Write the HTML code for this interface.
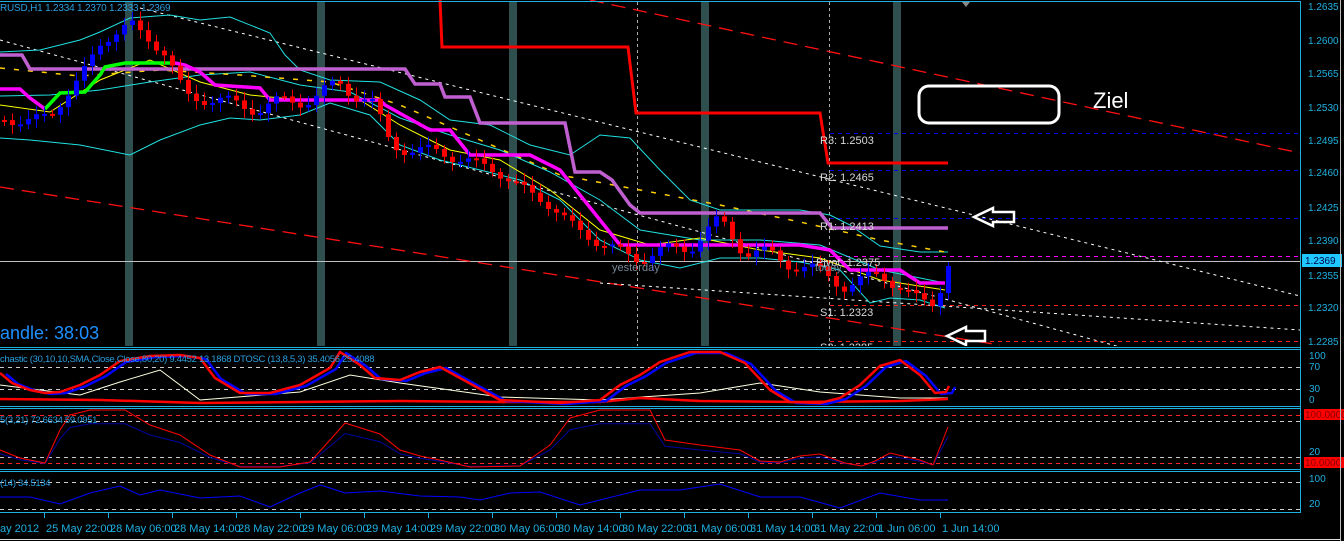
<!DOCTYPE html>
<html><head><meta charset="utf-8">
<style>
html,body{margin:0;padding:0;background:#000;width:1344px;height:541px;overflow:hidden}
svg{display:block}
text{font-family:"Liberation Sans",sans-serif}
</style></head><body>
<svg id="s" width="1344" height="541" viewBox="0 0 1344 541" xmlns="http://www.w3.org/2000/svg">
<rect width="1344" height="541" fill="#000"/>
<g fill="#2f4f4f">
<rect x="125" y="2" width="8" height="345"/><rect x="317" y="2" width="8" height="345"/>
<rect x="509" y="2" width="8" height="345"/><rect x="701" y="2" width="8" height="345"/>
<rect x="893" y="2" width="8" height="345"/>
</g>
<g stroke="#aaa" stroke-dasharray="3,3" stroke-width="1">
<line x1="637.5" y1="2" x2="637.5" y2="347"/><line x1="829.5" y1="2" x2="829.5" y2="347"/>
</g>
<g stroke-dasharray="4,4" stroke-width="1">
<line x1="830" y1="133.5" x2="1300" y2="133.5" stroke="#0000e0"/>
<line x1="830" y1="170.5" x2="1300" y2="170.5" stroke="#0000e0"/>
<line x1="830" y1="218.5" x2="1300" y2="218.5" stroke="#0000e0"/>
<line x1="830" y1="256.5" x2="1300" y2="256.5" stroke="#ff00ff"/>
<line x1="830" y1="305.5" x2="1300" y2="305.5" stroke="#ff2020"/>
<line x1="830" y1="341.5" x2="1300" y2="341.5" stroke="#ff2020"/>
</g>
<line x1="0" y1="261.5" x2="1300" y2="261.5" stroke="#c0c0c0"/>
<g stroke="#ff1010" stroke-dasharray="14,8" stroke-width="1.3" fill="none">
<line x1="590" y1="0" x2="1300" y2="153"/>
<line x1="0" y1="187" x2="1000" y2="345"/>
</g>
<g stroke="#fff" stroke-dasharray="3,4" stroke-width="1" fill="none">
<line x1="140" y1="8" x2="1300" y2="296"/>
<line x1="0" y1="40" x2="1120" y2="347"/>
<line x1="600" y1="283" x2="1300" y2="330"/>
</g>
<g id="dyn"></g>
<rect x="919" y="86" width="140" height="37" rx="10" fill="none" stroke="#fff" stroke-width="3"/>
<text x="1093" y="108" fill="#fff" font-size="22">Ziel</text>
<path d="M974,217 L993,208 L993,212 L1014,212 L1014,222 L993,222 L993,226 Z" fill="none" stroke="#fff" stroke-width="2.5"/>
<path d="M947,336 L966,327 L966,331 L985,331 L985,341 L966,341 L966,345 Z" fill="none" stroke="#fff" stroke-width="2.5"/>
<g fill="#d8d8d8" font-size="11">
<text x="820" y="144">R3: 1.2503</text><text x="820" y="181">R2: 1.2465</text>
<text x="820" y="230">R1: 1.2413</text><text x="816" y="266">Pivot: 1.2375</text>
<text x="820" y="316">S1: 1.2323</text><text x="820" y="351">S2: 1.2285</text>
</g>
<text x="612" y="271" fill="#789" font-size="11">yesterday</text>
<text x="815" y="271" fill="#789" font-size="11">today</text>
<text x="0" y="11" fill="#2a9fe0" font-size="10" letter-spacing="-0.2">RUSD,H1  1.2334 1.2370 1.2333 1.2369</text>
<text x="0" y="339" fill="#1e90ff" font-size="18">andle:  38:03</text>
<path d="M962,2 L970,2 L966,7 Z" fill="#888"/>
<rect x="0" y="346" width="1300" height="6" fill="#000"/>
<g fill="none" stroke="#1fb0e0" stroke-width="1">
<line x1="0" y1="1.5" x2="1300" y2="1.5"/>
<line x1="0" y1="347.5" x2="1300" y2="347.5"/><line x1="0" y1="349.5" x2="1300" y2="349.5"/>
<line x1="0" y1="406.5" x2="1300" y2="406.5"/><line x1="0" y1="408.5" x2="1300" y2="408.5"/>
<line x1="0" y1="469.5" x2="1300" y2="469.5"/><line x1="0" y1="471.5" x2="1300" y2="471.5"/>
<line x1="0" y1="512.5" x2="1300" y2="512.5"/>
<line x1="1300.5" y1="1" x2="1300.5" y2="513"/>
</g>
<rect x="0" y="350" width="1300" height="56" fill="#000"/>
<rect x="0" y="409" width="1300" height="60" fill="#000"/>
<rect x="0" y="472" width="1300" height="40" fill="#000"/>
<g stroke-dasharray="4,4" stroke-width="1">
<line x1="0" y1="367.5" x2="1300" y2="367.5" stroke="#ccc"/>
<line x1="0" y1="389.5" x2="1300" y2="389.5" stroke="#ccc"/>
<line x1="0" y1="415.5" x2="1300" y2="415.5" stroke="#ff2020"/>
<line x1="0" y1="421.5" x2="1300" y2="421.5" stroke="#ccc"/>
<line x1="0" y1="457.5" x2="1300" y2="457.5" stroke="#ccc"/>
<line x1="0" y1="463.5" x2="1300" y2="463.5" stroke="#ff2020"/>
<line x1="0" y1="482.5" x2="1300" y2="482.5" stroke="#ccc"/>
<line x1="0" y1="509.5" x2="1300" y2="509.5" stroke="#ccc"/>
</g>
<g id="osc"></g>
<g fill="#2a9fe0" font-size="9.5" letter-spacing="-0.3">
<text x="0" y="362">chastic (30,10,10,SMA,Close,Close,80,20) 9.4452 13.1868  DTOSC (13,8,5,3) 35.4056 25.4088</text>
<text x="0" y="423">5(3,21) 72.6634 59.0951</text>
<text x="0" y="486">(14) 34.5134</text>
</g>
<g fill="#1fb0e0" font-size="10">
<text x="1308" y="10">1.2635</text><text x="1308" y="44">1.2600</text><text x="1308" y="77">1.2565</text>
<text x="1308" y="111">1.2530</text><text x="1308" y="144">1.2495</text><text x="1308" y="176">1.2460</text>
<text x="1308" y="211">1.2425</text><text x="1308" y="244">1.2390</text><text x="1308" y="279">1.2355</text>
<text x="1308" y="311">1.2320</text><text x="1308" y="345">1.2285</text>
<text x="1309" y="359">100</text><text x="1309" y="370">70</text><text x="1309" y="392">30</text><text x="1309" y="403">0</text>
<text x="1309" y="420">80</text><text x="1309" y="455">20</text>
<text x="1309" y="482">100</text><text x="1309" y="507">20</text>
</g>
<rect x="1302" y="254" width="40" height="13" fill="#1ec8ff"/>
<text x="1305" y="264" fill="#004" font-size="10">1.2369</text>
<rect x="1304" y="409" width="40" height="11" fill="#ff0000"/>
<text x="1305" y="418" fill="#800" font-size="10">100.0000</text>
<rect x="1304" y="457" width="40" height="11" fill="#ff0000"/>
<text x="1305" y="466" fill="#800" font-size="10">10.0000</text>
<g fill="#1fb0e0" font-size="11" id="dates"><text x="0" y="532">ay 2012</text></g>
<line x1="0" y1="539.5" x2="1340" y2="539.5" stroke="#ddd"/>
<line x1="1340.5" y1="0" x2="1340.5" y2="541" stroke="#bbb"/>
</svg>
<script>
var NS="http://www.w3.org/2000/svg";
function el(p,t,a){var e=document.createElementNS(NS,t);for(var k in a)e.setAttribute(k,a[k]);p.appendChild(e);return e;}
function pl(p,pts,c,w,d){var a={points:pts.map(function(q){return q.join(",")}).join(" "),fill:"none",stroke:c,"stroke-width":w};if(d)a["stroke-dasharray"]=d;el(p,"polyline",a);}
var g=document.getElementById("dyn"),o=document.getElementById("osc"),dt=document.getElementById("dates");
pl(g,[[0,52],[40,50],[80,40],[100,32],[130,18],[170,15],[200,20],[230,17],[270,33],[285,55],[300,70],[330,80],[380,82],[420,100],[450,120],[490,125],[530,145],[570,155],[600,135],[630,138],[660,170],[690,200],[720,210],[800,210],[830,215],[850,225],[880,246],[920,252],[948,252]],"#20e0e0",1);
pl(g,[[0,138],[30,140],[80,145],[130,155],[160,140],[200,125],[230,118],[260,120],[300,115],[330,103],[370,115],[400,145],[440,160],[480,170],[520,180],[560,200],[600,240],[640,260],[680,268],[720,258],[760,258],[800,262],[840,270],[870,303],[890,298],[920,300],[945,308]],"#20e0e0",1);
pl(g,[[0,96],[50,95],[100,90],[150,82],[200,75],[250,72],[300,85],[350,92],[400,118],[450,135],[500,150],[550,172],[600,200],[640,230],[700,240],[760,240],[820,245],[880,270],[945,283]],"#20e0e0",1);
pl(g,[[0,105],[50,112],[100,80],[150,60],[200,82],[250,95],[300,100],[360,100],[400,125],[450,150],[500,160],[550,190],[600,230],[650,245],[700,238],[760,250],[820,258],[880,280],[945,290]],"#ffff00",1);
pl(g,[[0,68],[80,76],[160,70],[240,75],[330,82],[400,105],[480,140],[560,175],[640,190],[720,205],[800,222],[880,240],[945,252]],"#ffd000",1.5,"5,9");
pl(g,[[440,0],[442,47],[628,47],[636,113],[820,113],[828,163],[948,163]],"#ff0000",3);
pl(g,[[0,55],[22,55],[30,69],[405,69],[415,84],[440,84],[445,97],[470,97],[480,123],[565,123],[575,172],[600,172],[612,180],[630,205],[640,213],[820,213],[832,228],[948,228]],"#c060d0",3.5);
pl(g,[[0,89],[20,89],[30,98],[45,109]],"#ff00ff",3.5);
pl(g,[[45,109],[60,93],[85,92],[100,75],[105,67],[125,63],[175,63]],"#00ff00",3.5);
pl(g,[[175,63],[185,65],[200,72],[215,85],[260,88],[270,100],[380,100],[385,105],[430,130],[450,130],[470,155],[530,155],[560,170],[600,220],[620,245],[800,245],[830,250],[850,270],[900,270],[920,283],[945,283]],"#ff00ff",3.5);
var path=[[0,120],[50,118],[80,75],[100,45],[130,22],[165,55],[185,95],[210,100],[260,108],[320,95],[340,85],[370,100],[390,145],[420,150],[470,160],[520,185],[560,215],[600,245],[640,258],[690,245],[720,222],[745,250],[800,265],[845,285],[880,275],[920,300],[935,305],[948,265]];
function tgt(x){for(var i=1;i<path.length;i++){if(x<=path[i][0]){var a=path[i-1],b=path[i];return a[1]+(b[1]-a[1])*(x-a[0])/(b[0]-a[0]);}}return path[path.length-1][1];}
var prev=120;
for(var x=4;x<=948;x+=8){var c=tgt(x)+Math.sin(x*1.7)*6+Math.cos(x*0.9)*3;var op=prev;var hi=Math.min(op,c)-3-Math.abs(Math.sin(x*2.3))*6,lo=Math.max(op,c)+3+Math.abs(Math.cos(x*1.3))*6;var col=c>op?"#ff0000":"#0000ff";
el(g,"line",{x1:x+.5,y1:hi,x2:x+.5,y2:lo,stroke:col,"stroke-width":1});
el(g,"rect",{x:x-2,y:Math.min(op,c),width:5,height:Math.max(2,Math.abs(c-op)),fill:col});prev=c;}
var sr=[[0,373],[12,383],[30,390],[45,393],[60,392],[80,385],[100,375],[120,361],[150,356],[180,355],[200,358],[215,378],[240,393],[270,393],[300,385],[330,368],[340,352],[360,365],[375,378],[400,380],[420,372],[440,367],[460,378],[500,400],[560,403],[600,400],[620,385],[640,375],[660,362],[690,352],[720,352],[745,363],[770,390],[790,402],[820,403],[840,398],[860,385],[880,366],[900,360],[920,375],[935,393],[946,392],[949,386]];
pl(o,[[0,385],[40,390],[80,395],[120,382],[160,370],[200,400],[300,392],[350,375],[400,383],[500,397],[600,400],[700,393],[760,383],[820,392],[900,398],[948,398]],"#ffffe0",1);
pl(o,[[0,399],[100,400],[200,403],[300,402],[400,401],[500,402],[600,402],[640,398],[700,401],[800,402],[900,401],[948,399]],"#ff0000",2.5);
pl(o,sr.map(function(p){return [p[0]+6,p[1]+1];}),"#0000ff",2.5);
pl(o,sr,"#ff0000",2.5);
var rr=[[0,450],[20,458],[45,463],[60,430],[70,415],[90,410],[125,410],[150,425],[180,435],[210,455],[240,467],[280,467],[310,462],[330,440],[345,423],[380,434],[400,450],[420,456],[440,460],[470,467],[520,466],[550,445],[570,418],[600,410],[650,410],[665,440],[700,445],[740,450],[760,461],[780,462],[800,456],[820,454],[845,463],[862,466],[875,461],[890,453],[920,460],[933,465],[948,427]];
pl(o,rr.map(function(p){return [p[0],p[1]+(465-p[1])*0.25];}),"#0000a0",1);
pl(o,rr,"#ff0000",1);
pl(o,[[0,497],[30,497],[60,504],[90,493],[120,486],[140,495],[160,490],[200,498],[240,496],[270,507],[300,493],[320,485],[330,488],[345,493],[380,491],[420,496],[460,497],[480,500],[510,493],[540,492],[580,505],[640,490],[680,490],[720,484],[760,497],[800,497],[840,508],[880,493],[920,500],[948,500]],"#0000ff",1);
var L=["25 May 22:00","28 May 06:00","28 May 14:00","28 May 22:00","29 May 06:00","29 May 14:00","29 May 22:00","30 May 06:00","30 May 14:00","30 May 22:00","31 May 06:00","31 May 14:00","31 May 22:00","1 Jun 06:00","1 Jun 14:00"];
for(var i=0;i<L.length;i++){var tx=44+i*64;var t=el(dt,"text",{x:tx+2,y:532});t.textContent=L[i];el(dt,"line",{x1:tx+.5,y1:513,x2:tx+.5,y2:518,stroke:"#1fb0e0"});}
</script>
</body></html>
